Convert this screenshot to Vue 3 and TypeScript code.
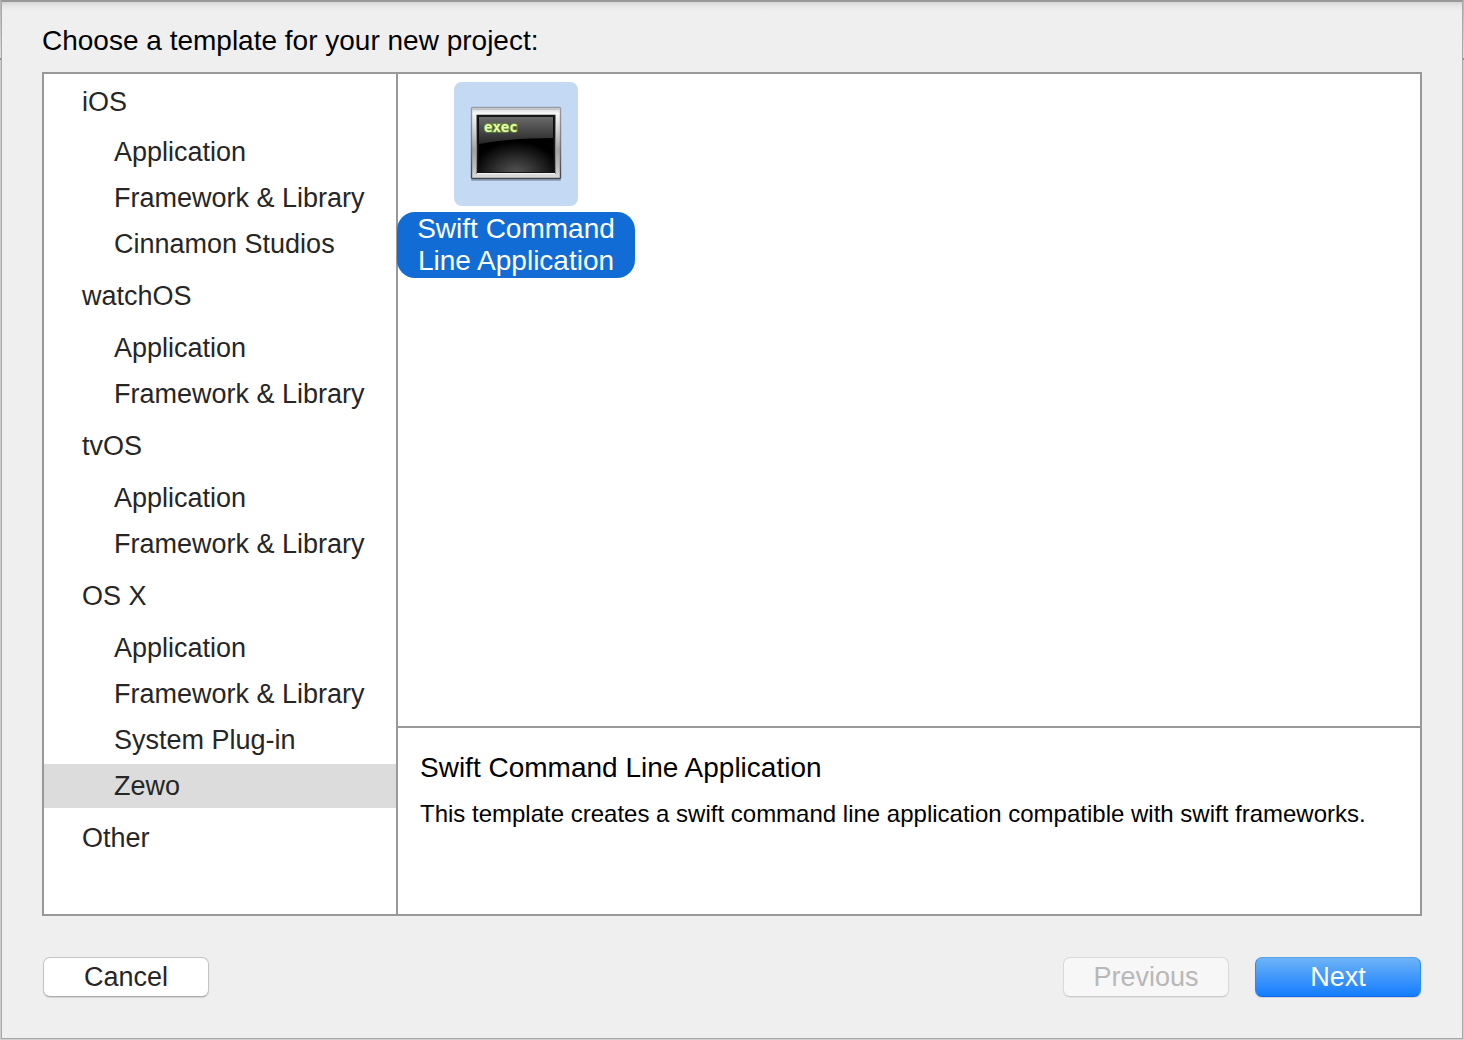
<script setup lang="ts">
import { ref } from 'vue'

interface Group {
  name: string
  items: string[]
}

const groups: Group[] = [
  { name: 'iOS', items: ['Application', 'Framework & Library', 'Cinnamon Studios'] },
  { name: 'watchOS', items: ['Application', 'Framework & Library'] },
  { name: 'tvOS', items: ['Application', 'Framework & Library'] },
  { name: 'OS X', items: ['Application', 'Framework & Library', 'System Plug-in', 'Zewo'] },
  { name: 'Other', items: [] },
]

const selected = ref('OS X/Zewo')
</script>

<template>
  <div class="backdrop">
    <main class="sheet">
      <h1 class="title">Choose a template for your new project:</h1>

      <div class="chooser">
        <nav class="sidebar" aria-label="Template categories">
          <section v-for="group in groups" :key="group.name" class="group">
            <h2 class="group-name">{{ group.name }}</h2>
            <button
              v-for="item in group.items"
              :key="item"
              type="button"
              class="category"
              :class="{ selected: selected === `${group.name}/${item}` }"
              @click="selected = `${group.name}/${item}`"
            >{{ item }}</button>
          </section>
        </nav>

        <div class="content">
          <div class="templates">
            <button type="button" class="template" aria-pressed="true">
              <span class="tile">
                <svg width="100" height="84" viewBox="0 0 100 84" aria-hidden="true">
                  <defs>
                    <linearGradient id="frame" x1="0" y1="0" x2="0" y2="1">
                      <stop offset="0" stop-color="#d2d2d2" />
                      <stop offset="0.08" stop-color="#f7f7f7" />
                      <stop offset="0.3" stop-color="#d8d8d8" />
                      <stop offset="0.6" stop-color="#a2a2a2" />
                      <stop offset="0.85" stop-color="#bebebe" />
                      <stop offset="1" stop-color="#dedede" />
                    </linearGradient>
                    <linearGradient id="edge" x1="0" y1="0" x2="0" y2="1">
                      <stop offset="0" stop-color="#989da4" />
                      <stop offset="0.5" stop-color="#777b80" />
                      <stop offset="1" stop-color="#43474c" />
                    </linearGradient>
                    <radialGradient id="glow" cx="0.5" cy="1.05" r="0.6">
                      <stop offset="0" stop-color="#5a5a5a" />
                      <stop offset="0.5" stop-color="#2e2e2e" />
                      <stop offset="1" stop-color="#000" />
                    </radialGradient>
                    <linearGradient id="gloss" x1="0" y1="0" x2="0" y2="1">
                      <stop offset="0" stop-color="#6a6a6a" />
                      <stop offset="1" stop-color="#262626" />
                    </linearGradient>
                  </defs>
                  <rect x="5" y="76" width="90" height="3" rx="1" fill="#65778d" opacity="0.5" />
                  <rect x="5.5" y="5.5" width="89" height="71" rx="1" fill="url(#frame)" stroke="url(#edge)" stroke-width="1.4" />
                  <path d="M7 7.5H93" stroke="#bfc1c3" />
                  <rect x="10" y="12.5" width="80" height="60" fill="#eee" />
                  <path d="M10.5 72V13H89.5V72" fill="none" stroke="#888" />
                  <rect x="11" y="13" width="78" height="58" fill="#171717" />
                  <rect x="12.5" y="15" width="75" height="55" fill="url(#glow)" />
                  <path d="M13 15H87V36Q43 36 13 42Z" fill="url(#gloss)" />
                  <text class="prompt-glow" x="18" y="30">exec</text>
                  <text class="prompt" x="18" y="30">exec</text>
                </svg>
              </span>
              <span class="template-name">Swift Command<br />Line Application</span>
            </button>
          </div>
          <section class="details">
            <h2 class="details-title">Swift Command Line Application</h2>
            <p class="details-text">This template creates a swift command line application compatible with swift frameworks.</p>
          </section>
        </div>
      </div>

      <footer class="actions">
        <button type="button" class="action">Cancel</button>
        <span class="spacer"></span>
        <button type="button" class="action" disabled>Previous</button>
        <button type="button" class="action primary">Next</button>
      </footer>
    </main>
  </div>
</template>

<style>
body {
  background: #d0d0d0;
}
</style>

<style scoped>
* {
  box-sizing: border-box;
}

.backdrop {
  min-height: 100vh;
  display: flex;
  padding: 0 1px 1px;
  background: linear-gradient(#b4b4b4, #dedede 58px, #8c8c8c 58px, #8c8c8c 60px, #cfcfcf 60px);
  font-family: "Liberation Sans", Arial, sans-serif;
  font-size: 27px;
  line-height: 32px;
  color: #262626;
}

button {
  font: inherit;
  color: inherit;
  margin: 0;
}

h1,
h2,
p {
  margin: 0;
  font-weight: 400;
}

.sheet {
  flex: 1;
  min-width: 0;
  display: flex;
  flex-direction: column;
  padding: 23px 40px 41px;
  border: 1px solid #a8a8a8;
  border-top: 2px solid #999;
  background: linear-gradient(#d6d6d6, #e6e6e6 4px, #efefef 9px);
}

.title {
  font-size: 28px;
  color: #000;
}

.chooser {
  flex: 1;
  display: flex;
  margin-top: 15px;
  border: 2px solid #999;
  background: #fff;
}

.sidebar {
  width: 354px;
  flex: none;
  display: flex;
  flex-direction: column;
  gap: 2px;
  border-right: 2px solid #999;
}

.group {
  display: flex;
  flex-direction: column;
  gap: 2px;
}

.group-name {
  height: 56px;
  padding-left: 38px;
  font-size: 27px;
  line-height: 56px;
}

.group:first-child .group-name {
  height: 54px;
}

.category {
  height: 44px;
  padding: 0 0 0 70px;
  border: 0;
  background: none;
  line-height: 44px;
  text-align: left;
  white-space: nowrap;
}

.category.selected {
  background: #dcdcdc;
}

.content {
  flex: 1;
  min-width: 0;
  display: flex;
  flex-direction: column;
}

.templates {
  flex: 1;
  padding-top: 8px;
}

.template {
  display: flex;
  flex-direction: column;
  align-items: center;
  gap: 6px;
  width: 238px;
  margin-left: -1px;
  padding: 0;
  border: 0;
  background: none;
}

.tile {
  display: flex;
  align-items: center;
  justify-content: center;
  width: 124px;
  height: 124px;
  border-radius: 8px;
  background: #c3d9f4;
}

.prompt,
.prompt-glow {
  font: bold 14px "DejaVu Sans Mono", monospace;
  fill: #e2ffa6;
}

.prompt-glow {
  fill: #79b828;
  stroke: #79b828;
  stroke-width: 2px;
  opacity: 0.45;
}

.template-name {
  width: 100%;
  height: 66px;
  padding-top: 1px;
  border-radius: 18px;
  background: #116cd6;
  color: #fff;
  font-size: 28px;
}

.details {
  height: 188px;
  padding: 24px 22px 0;
  border-top: 2px solid #999;
  color: #000;
}

.details-title {
  font-size: 28px;
}

.details-text {
  margin-top: 14px;
  font-size: 24px;
}

.actions {
  display: flex;
  gap: 26px;
  padding: 0 1px;
  margin-top: 41px;
}

.spacer {
  flex: 1;
}

.action {
  width: 166px;
  height: 40px;
  padding: 0;
  border: 1px solid #c4c4c4;
  border-bottom-color: #acacac;
  border-radius: 7px;
  background: #fff;
  box-shadow: 0 1px 1px rgba(0, 0, 0, 0.12);
}

.action:disabled {
  border-color: #dadada;
  border-bottom-color: #cbcbcb;
  background: #f7f7f7;
  color: #b8b8b8;
  box-shadow: 0 1px 1px rgba(0, 0, 0, 0.05);
}

.action.primary {
  border-color: #55a1ee #3287f2 #0f66ec;
  background: linear-gradient(#6db3f7, #157dff);
  color: #fff;
}
</style>
